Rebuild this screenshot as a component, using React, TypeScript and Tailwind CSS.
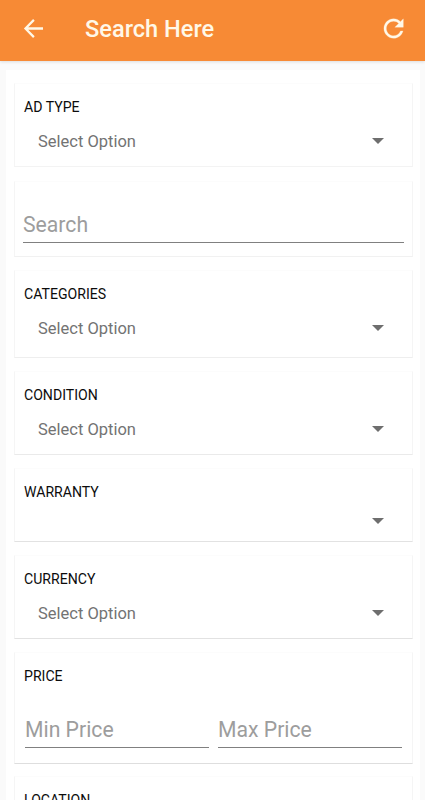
import React from "react";

function Label({ children }: { children: React.ReactNode }) {
  return <div className="ml-[9px] h-4 text-[14.1px] leading-4 whitespace-nowrap text-[#0c0c0c]">{children}</div>;
}

function Card({ className, children }: { className: string; children?: React.ReactNode }) {
  return (
    <section
      className={`shrink-0 border-x border-t border-b border-x-[#f5f5f5] border-t-[#fcfcfc] bg-white pt-[15px] ${className}`}
    >
      {children}
    </section>
  );
}

function Dropdown({ value, className }: { value: string; className: string }) {
  return (
    <div className={`flex h-5 items-center justify-between pr-[28px] pl-[23px] ${className}`}>
      <span className="text-[16.5px] leading-5 whitespace-nowrap text-[#737373]">{value}</span>
      <svg className="mb-[2px] h-[6px] w-3" viewBox="0 0 12 6" fill="#6e6e6e">
        <path d="M0 0h12L6 6z" />
      </svg>
    </div>
  );
}

function Field({ hint, className }: { hint: string; className: string }) {
  return (
    <div className={`border-b border-[#808080] text-[21.2px] whitespace-nowrap text-[#9d9d9d] ${className}`}>
      {hint}
    </div>
  );
}

export default function App() {
  return (
    <div className="flex h-[800px] w-[425px] flex-col overflow-hidden bg-[#fafafa] font-['Roboto','Liberation_Sans',sans-serif]">
      <header className="z-10 flex h-[61px] shrink-0 items-center bg-[#f78a35] pr-[18px] pb-[4px] pl-[21px] shadow-[0_1px_3px_rgba(0,0,0,0.12)]">
        <svg className="h-6 w-6" viewBox="0 0 24 24" fill="#fff8e8">
          <path d="M22 10.3H7.2l6.5-6.6-1.6-1.6L2.9 11.5l9.2 9.4 1.6-1.6-6.5-6.6H22z" />
        </svg>
        <h1 className="ml-[40px] flex-1 text-[23.6px] leading-7 font-medium whitespace-nowrap text-[#fff8e8]">Search Here</h1>
        <svg
          className="h-[26px] w-[26px]"
          viewBox="0 0 24 24"
          fill="#fff8e8"
          stroke="#fff8e8"
          strokeWidth="0.2"
        >
          <path
            d="M17.65 6.35C16.2 4.9 14.21 4 12 4c-4.42 0-7.99 3.58-7.99 8s3.57 8 7.99 8c3.73 0 6.84-2.55 7.73-6h-2.08c-.82 2.33-3.04 4-5.65 4-3.31 0-6-2.69-6-6s2.69-6 6-6c1.66 0 3.14.69 4.22 1.78L13 11h7V4l-2.35 2.35z"
            transform="translate(-1.8 -1.9) scale(1.12)"
          />
        </svg>
      </header>
      <main className="mt-[9px] mr-[5px] ml-[6px] flex min-h-0 flex-1 flex-col bg-white pt-[13px] pr-[7px] pl-[8px]">
        <Card className="h-[84px] border-b-[#f3f3f3]">
          <Label>AD TYPE</Label>
          <Dropdown value="Select Option" className="mt-[17px]" />
        </Card>
        <Card className="mt-[14px] h-[76px] border-b-[#f1f1f1]">
          <Field hint="Search" className="mt-[11px] mr-[8px] ml-[8px] h-[35px] leading-[34px]" />
        </Card>
        <Card className="mt-[13px] h-[88px] border-b-[#eeeeee]">
          <Label>CATEGORIES</Label>
          <Dropdown value="Select Option" className="mt-[17px]" />
        </Card>
        <Card className="mt-[13px] h-[84px] border-b-[#eaeaea]">
          <Label>CONDITION</Label>
          <Dropdown value="Select Option" className="mt-[17px]" />
        </Card>
        <Card className="mt-[13px] h-[74px] border-b-[#e2e2e2]">
          <Label>WARRANTY</Label>
          <Dropdown value="" className="mt-[12px]" />
        </Card>
        <Card className="mt-[13px] h-[84px] border-b-[#e2e2e2]">
          <Label>CURRENCY</Label>
          <Dropdown value="Select Option" className="mt-[17px]" />
        </Card>
        <Card className="mt-[13px] h-[112px] border-b-[#dedede]">
          <Label>PRICE</Label>
          <div className="mt-[29px] mr-[10px] ml-[10px] flex gap-[9px]">
            <Field hint="Min Price" className="h-[35px] flex-1 leading-[34px]" />
            <Field hint="Max Price" className="h-[35px] flex-1 leading-[34px]" />
          </div>
        </Card>
        <Card className="mt-[12px] h-[84px] border-b-[#e2e2e2]">
          <Label>LOCATION</Label>
        </Card>
      </main>
    </div>
  );
}
